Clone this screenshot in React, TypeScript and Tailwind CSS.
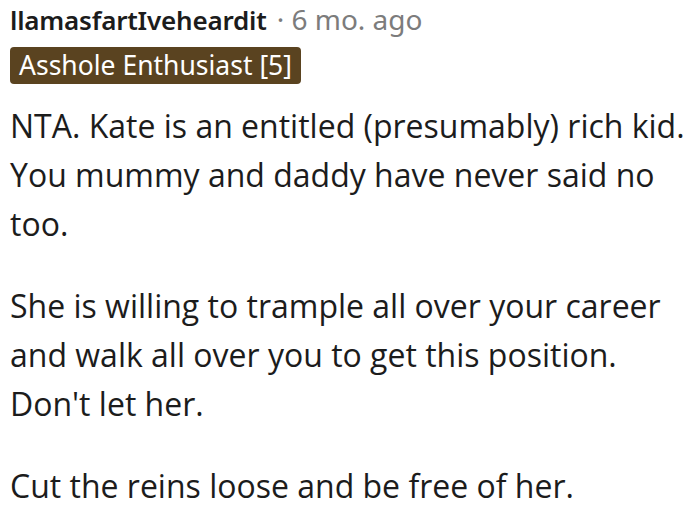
export default function App() {
  return (
    <div className="min-h-screen w-[700px] bg-white pl-[10px] pr-[4px] text-[#1a1a1b]">
      <div className="-mt-[2px] flex items-baseline h-[32px] font-['Noto_Sans',sans-serif]">
        <span className="text-[26px] font-semibold tracking-[-0.2px] text-[#1c1c1c]">llamasfartIveheardit</span>
        <span className="ml-[10px] text-[28px] text-[#7c7c7c]">· 6 mo. ago</span>
      </div>
      <div className="mt-[17px] inline-flex h-[37px] items-center rounded-[4px] bg-[#5a4320] px-[9px] text-[26.5px] text-white font-['Noto_Sans',sans-serif]">
        Asshole Enthusiast [5]
      </div>
      <div className="mt-[17px] text-[32px] leading-[49px] text-[#1c1c1c] font-['Open_Sans',sans-serif]">
        <p>NTA. Kate is an entitled (presumably) rich kid. You mummy and daddy have never said no too.</p>
        <p className="mt-[33px]">She is willing to trample all over your career and walk all over you to get this position. Don't let her.</p>
        <p className="mt-[33px]">Cut the reins loose and be free of her.</p>
      </div>
    </div>
  );
}
